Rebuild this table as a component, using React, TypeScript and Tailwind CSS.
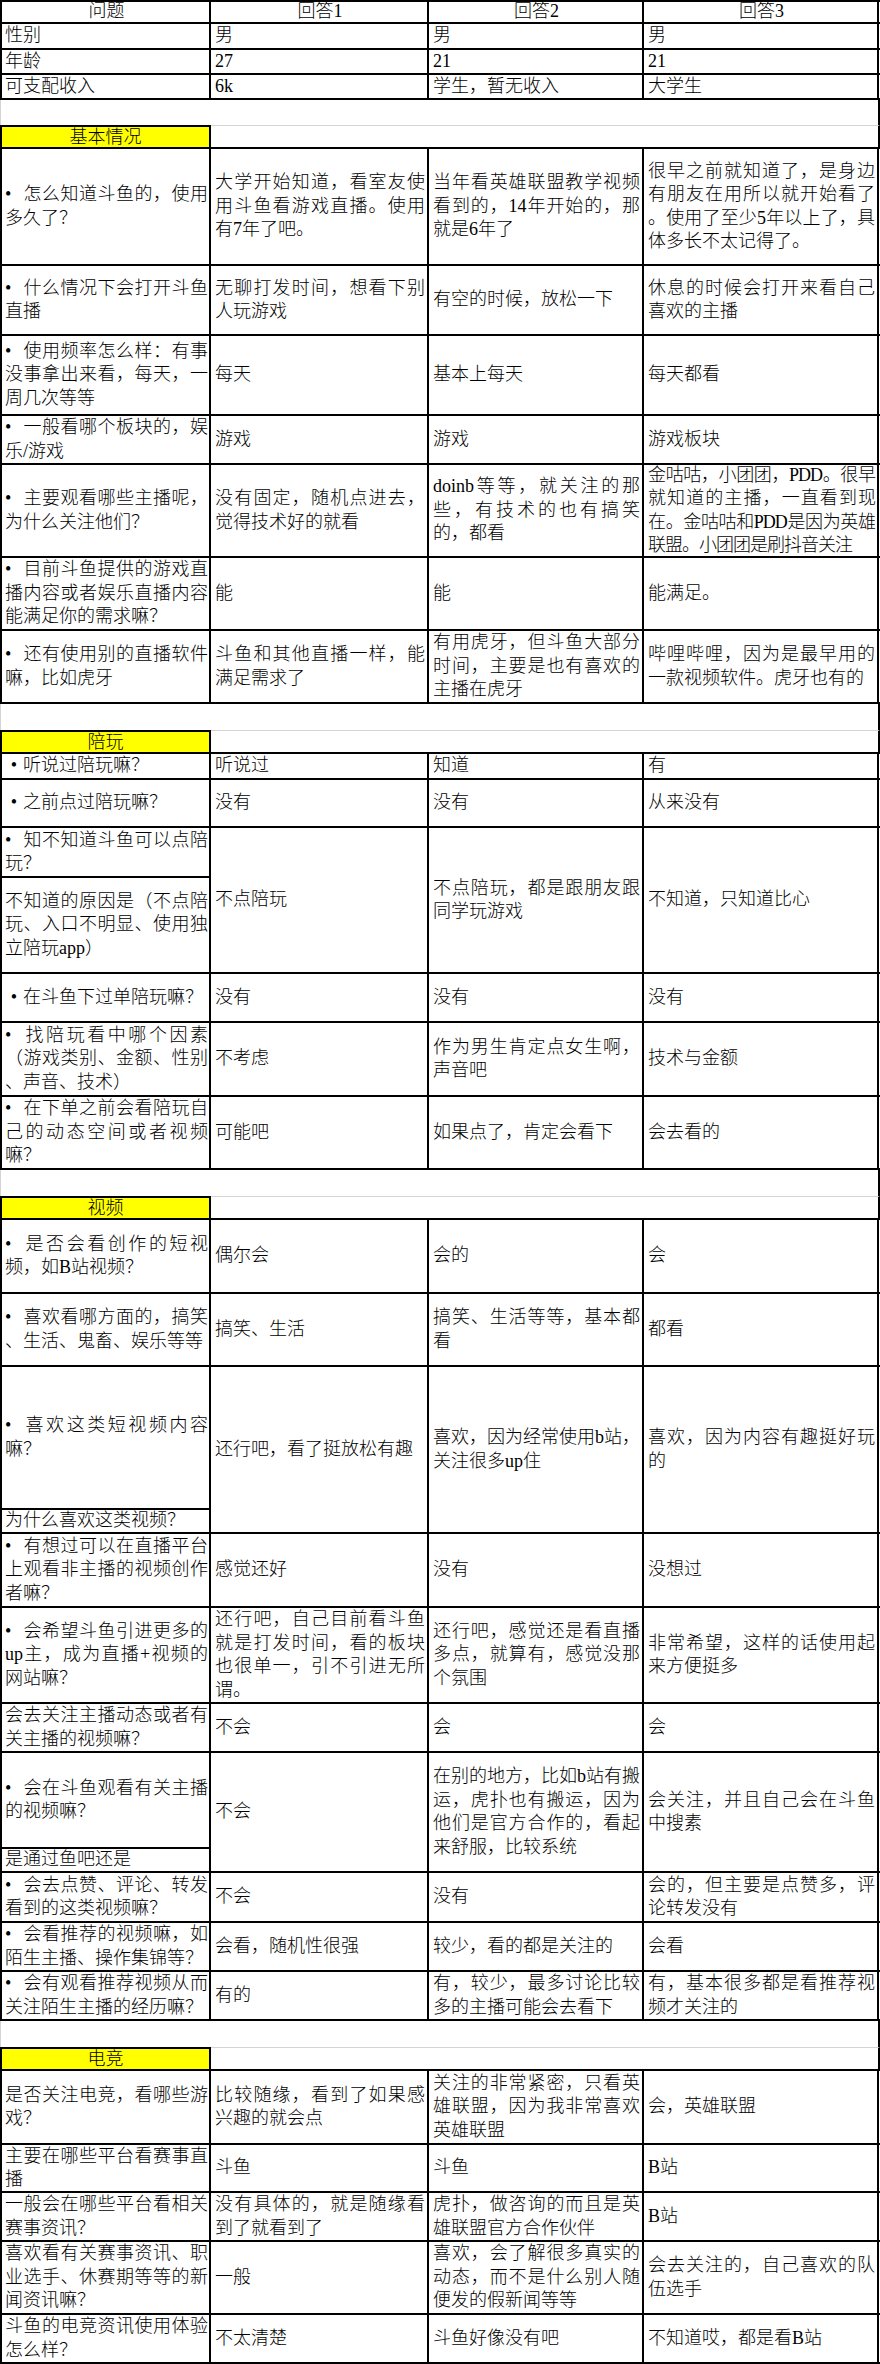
type Row = {
  h: string
  q: string
  split?: { h: string; q: string }
  a: [string, string, string]
}

const W = ['w-[209px]', 'w-[218px]', 'w-[215px]', 'w-[235px]']

const top: { h: string; c: [string, string, string, string] }[] = [
  { h: 'h-[22px]', c: ['问题', '回答1', '回答2', '回答3'] },
  { h: 'h-[26px]', c: ['性别', '男', '男', '男'] },
  { h: 'h-[25px]', c: ['年龄', '27', '21', '21'] },
  { h: 'h-[25px]', c: ['可支配收入', '6k', '学生，暂无收入', '大学生'] },
]

// a leading "~" marks a cell whose lines are set a little tighter
const sections: { title: string; rows: Row[] }[] = [
  {
    title: '基本情况',
    rows: [
      {
        h: 'h-[117px]',
        q: '•怎么知道斗鱼的，使用\n多久了？',
        a: [
          '大学开始知道，看室友使\n用斗鱼看游戏直播。使用\n有7年了吧。',
          '当年看英雄联盟教学视频\n看到的，14年开始的，那\n就是6年了',
          '很早之前就知道了，是身边\n有朋友在用所以就开始看了\n。使用了至少5年以上了，具\n体多长不太记得了。',
        ],
      },
      {
        h: 'h-[70px]',
        q: '•什么情况下会打开斗鱼\n直播',
        a: ['无聊打发时间，想看下别\n人玩游戏', '有空的时候，放松一下', '休息的时候会打开来看自己\n喜欢的主播'],
      },
      { h: 'h-[80px]', q: '•使用频率怎么样：有事\n没事拿出来看，每天，一\n周几次等等', a: ['每天', '基本上每天', '每天都看'] },
      { h: 'h-[49px]', q: '•一般看哪个板块的，娱\n乐/游戏', a: ['游戏', '游戏', '游戏板块'] },
      {
        h: 'h-[93px]',
        q: '•主要观看哪些主播呢，\n为什么关注他们？',
        a: [
          '没有固定，随机点进去，\n觉得技术好的就看',
          'doinb等等，就关注的那\n些，有技术的也有搞笑\n的，都看',
          '~金咕咕，小团团，PDD。很早\n就知道的主播，一直看到现\n在。金咕咕和PDD是因为英雄\n联盟。小团团是刷抖音关注',
        ],
      },
      { h: 'h-[73px]', q: '•目前斗鱼提供的游戏直\n播内容或者娱乐直播内容\n能满足你的需求嘛？', a: ['能', '能', '能满足。'] },
      {
        h: 'h-[73px]',
        q: '•还有使用别的直播软件\n嘛，比如虎牙',
        a: [
          '斗鱼和其他直播一样，能\n满足需求了',
          '有用虎牙，但斗鱼大部分\n时间，主要是也有喜欢的\n主播在虎牙',
          '哔哩哔哩，因为是最早用的\n一款视频软件。虎牙也有的',
        ],
      },
    ],
  },
  {
    title: '陪玩',
    rows: [
      { h: 'h-[26px]', q: '•听说过陪玩嘛？', a: ['听说过', '知道', '有'] },
      { h: 'h-[48px]', q: '•之前点过陪玩嘛？', a: ['没有', '没有', '从来没有'] },
      {
        h: 'h-[146px]',
        q: '•知不知道斗鱼可以点陪\n玩？',
        split: { h: 'h-[50px]', q: '不知道的原因是（不点陪\n玩、入口不明显、使用独\n立陪玩app）' },
        a: ['不点陪玩', '不点陪玩，都是跟朋友跟\n同学玩游戏', '不知道，只知道比心'],
      },
      { h: 'h-[49px]', q: '•在斗鱼下过单陪玩嘛？', a: ['没有', '没有', '没有'] },
      {
        h: 'h-[74px]',
        q: '•找陪玩看中哪个因素\n（游戏类别、金额、性别\n、声音、技术）',
        a: ['不考虑', '作为男生肯定点女生啊，\n声音吧', '技术与金额'],
      },
      {
        h: 'h-[73px]',
        q: '•在下单之前会看陪玩自\n己的动态空间或者视频\n嘛？',
        a: ['可能吧', '如果点了，肯定会看下', '会去看的'],
      },
    ],
  },
  {
    title: '视频',
    rows: [
      { h: 'h-[74px]', q: '•是否会看创作的短视\n频，如B站视频？', a: ['偶尔会', '会的', '会'] },
      {
        h: 'h-[73px]',
        q: '•喜欢看哪方面的，搞笑\n、生活、鬼畜、娱乐等等',
        a: ['搞笑、生活', '搞笑、生活等等，基本都\n看', '都看'],
      },
      {
        h: 'h-[167px]',
        q: '•喜欢这类短视频内容\n嘛？',
        split: { h: 'h-[143px]', q: '为什么喜欢这类视频？' },
        a: ['还行吧，看了挺放松有趣', '喜欢，因为经常使用b站，\n关注很多up住', '喜欢，因为内容有趣挺好玩\n的'],
      },
      {
        h: 'h-[74px]',
        q: '•有想过可以在直播平台\n上观看非主播的视频创作\n者嘛？',
        a: ['感觉还好', '没有', '没想过'],
      },
      {
        h: 'h-[96px]',
        q: '•会希望斗鱼引进更多的\nup主，成为直播+视频的\n网站嘛？',
        a: [
          '还行吧，自己目前看斗鱼\n就是打发时间，看的板块\n也很单一，引不引进无所\n谓。',
          '还行吧，感觉还是看直播\n多点，就算有，感觉没那\n个氛围',
          '非常希望，这样的话使用起\n来方便挺多',
        ],
      },
      { h: 'h-[49px]', q: '会去关注主播动态或者有\n关主播的视频嘛？', a: ['不会', '会', '会'] },
      {
        h: 'h-[120px]',
        q: '•会在斗鱼观看有关主播\n的视频嘛？',
        split: { h: 'h-[96px]', q: '是通过鱼吧还是' },
        a: [
          '不会',
          '在别的地方，比如b站有搬\n运，虎扑也有搬运，因为\n他们是官方合作的，看起\n来舒服，比较系统',
          '会关注，并且自己会在斗鱼\n中搜素',
        ],
      },
      {
        h: 'h-[50px]',
        q: '•会去点赞、评论、转发\n看到的这类视频嘛？',
        a: ['不会', '没有', '会的，但主要是点赞多，评\n论转发没有'],
      },
      {
        h: 'h-[49px]',
        q: '•会看推荐的视频嘛，如\n陌生主播、操作集锦等？',
        a: ['会看，随机性很强', '较少，看的都是关注的', '会看'],
      },
      {
        h: 'h-[49px]',
        q: '•会有观看推荐视频从而\n关注陌生主播的经历嘛？',
        a: ['有的', '有，较少，最多讨论比较\n多的主播可能会去看下', '有，基本很多都是看推荐视\n频才关注的'],
      },
    ],
  },
  {
    title: '电竞',
    rows: [
      {
        h: 'h-[74px]',
        q: '是否关注电竞，看哪些游\n戏？',
        a: ['比较随缘，看到了如果感\n兴趣的就会点', '关注的非常紧密，只看英\n雄联盟，因为我非常喜欢\n英雄联盟', '会，英雄联盟'],
      },
      { h: 'h-[48px]', q: '主要在哪些平台看赛事直\n播', a: ['斗鱼', '斗鱼', 'B站'] },
      {
        h: 'h-[49px]',
        q: '一般会在哪些平台看相关\n赛事资讯？',
        a: ['没有具体的，就是随缘看\n到了就看到了', '虎扑，做咨询的而且是英\n雄联盟官方合作伙伴', 'B站'],
      },
      {
        h: 'h-[73px]',
        q: '喜欢看有关赛事资讯、职\n业选手、休赛期等等的新\n闻资讯嘛？',
        a: ['一般', '喜欢，会了解很多真实的\n动态，而不是什么别人随\n便发的假新闻等等', '会去关注的，自己喜欢的队\n伍选手'],
      },
      { h: 'h-[49px]', q: '斗鱼的电竞资讯使用体验\n怎么样？', a: ['不太清楚', '斗鱼好像没有吧', '不知道哎，都是看B站'] },
    ],
  },
]

function Lines({ text, center }: { text: string; center?: boolean }) {
  const tight = text.startsWith('~')
  const lines = (tight ? text.slice(1) : text).split('\n')
  return (
    <div className={`w-full ${center ? 'text-center' : ''} ${tight ? 'tracking-[-1px]' : ''}`}>
      {lines.map((l, i) => {
        const last = i === lines.length - 1
        const bullet = l.startsWith('•')
        return (
          <div key={i} className={last ? 'whitespace-nowrap' : 'whitespace-nowrap text-justify [text-align-last:justify]'}>
            {bullet && <span className="inline-block w-[1em] text-center">•</span>}
            {bullet ? l.slice(1) : l}
          </div>
        )
      })}
    </div>
  )
}

const pad = ['pl-[3px] pr-[1px]', 'pl-[4px] pr-[2px]', 'pl-[4px] pr-[2px]', 'pl-[4px] pr-[2px]']

function Cell({ i, text, center }: { i: number; text: string; center?: boolean }) {
  return (
    <div className={`${W[i]} ${pad[i]} flex h-full shrink-0 items-center overflow-hidden border-r-2 border-black`}>
      <Lines text={text} center={center} />
    </div>
  )
}

function SectionRow({ r }: { r: Row }) {
  return (
    <div className={`flex border-b-2 border-l-2 border-black ${r.h}`}>
      {r.split ? (
        <div className={`${W[0]} flex h-full shrink-0 flex-col border-r-2 border-black`}>
          <div className={`${r.split.h} ${pad[0]} flex shrink-0 items-center overflow-hidden border-b-2 border-black`}>
            <Lines text={r.q} />
          </div>
          <div className={`${pad[0]} flex flex-1 items-center overflow-hidden`}>
            <Lines text={r.split.q} />
          </div>
        </div>
      ) : (
        <Cell i={0} text={r.q} />
      )}
      {r.a.map((t, i) => (
        <Cell key={i} i={i + 1} text={t} />
      ))}
    </div>
  )
}

function SectionHead({ title }: { title: string }) {
  return (
    <div className="flex h-[24px] border-b-2 border-black">
      <div className="flex w-[211px] shrink-0 items-center justify-center border-l-2 border-r-2 border-t-2 border-black bg-[#ffff00] leading-[20px]">
        {title}
      </div>
      <div className="flex-1 border-r-2 border-t border-r-black border-t-[#d4d4d4]" />
    </div>
  )
}

export default function App() {
  return (
    <div className="w-[880px] bg-white pb-[2px] font-['Liberation_Serif','Noto_Sans_CJK_SC',serif] text-[18px] font-light leading-[23.5px] text-black">
      <div className="border-t-2 border-black">
        {top.map((r, k) => (
          <div key={k} className={`flex border-b-2 border-l-2 border-black ${r.h}`}>
            {r.c.map((t, i) => (
              <Cell key={i} i={i} text={t} center={k === 0} />
            ))}
          </div>
        ))}
      </div>
      {sections.map((s, k) => (
        <div key={s.title}>
          <div className={k === 0 ? 'h-[25px] border-l border-r-2 border-l-[#d4d4d4] border-r-black' : 'h-[26px] border-l border-r-2 border-l-[#d4d4d4] border-r-black'} />
          <SectionHead title={s.title} />
          {s.rows.map((r, i) => (
            <SectionRow key={i} r={r} />
          ))}
        </div>
      ))}
    </div>
  )
}
